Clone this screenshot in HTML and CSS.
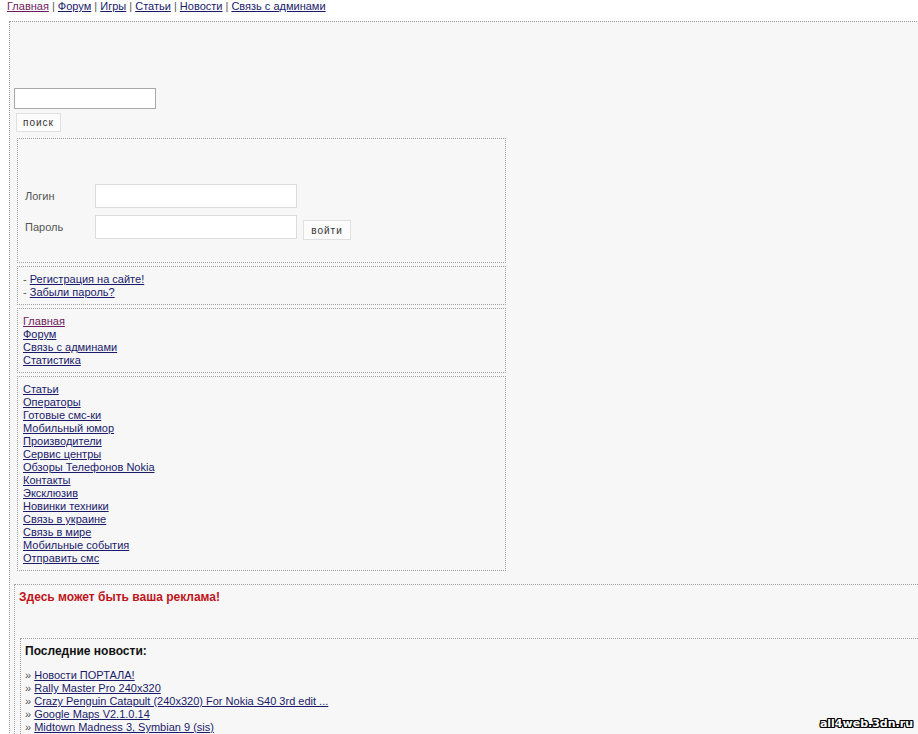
FILE: index.html
```html
<!DOCTYPE html>
<html lang="ru">
<head>
<meta charset="utf-8">
<title>all4web</title>
<link rel="stylesheet" href="styles.css">
</head>
<body>
<div class="topnav">
  <a href="#" class="visited">Главная</a> | <a href="#">Форум</a> | <a href="#">Игры</a> | <a href="#">Статьи</a> | <a href="#">Новости</a> | <a href="#">Связь с админами</a>
</div>
<div class="page">
  <div class="banner"></div>
  <form class="search">
    <input type="text" class="search-input">
    <button type="button" class="btn btn-search">поиск</button>
  </form>
  <div class="box login">
    <div class="login-row">
      <span class="login-label">Логин</span>
      <input type="text" class="login-input">
    </div>
    <div class="login-row">
      <span class="login-label">Пароль</span>
      <input type="password" class="login-input">
      <button type="button" class="btn btn-enter">войти</button>
    </div>
  </div>
  <div class="box links">
    <div>- <a href="#">Регистрация на сайте!</a></div>
    <div>- <a href="#">Забыли пароль?</a></div>
  </div>
  <div class="box links">
    <div><a href="#" class="visited">Главная</a></div>
    <div><a href="#">Форум</a></div>
    <div><a href="#">Связь с админами</a></div>
    <div><a href="#">Статистика</a></div>
  </div>
  <div class="box links">
    <div><a href="#">Статьи</a></div>
    <div><a href="#">Операторы</a></div>
    <div><a href="#">Готовые смс-ки</a></div>
    <div><a href="#">Мобильный юмор</a></div>
    <div><a href="#">Производители</a></div>
    <div><a href="#">Сервис центры</a></div>
    <div><a href="#">Обзоры Телефонов Nokia</a></div>
    <div><a href="#">Контакты</a></div>
    <div><a href="#">Эксклюзив</a></div>
    <div><a href="#">Новинки техники</a></div>
    <div><a href="#">Связь в украине</a></div>
    <div><a href="#">Связь в мире</a></div>
    <div><a href="#">Мобильные события</a></div>
    <div><a href="#">Отправить смс</a></div>
  </div>
  <div class="ad">
    <div class="ad-text">Здесь может быть ваша реклама!</div>
    <div class="news">
      <div class="news-title">Последние новости:</div>
      <div class="news-list">
        <div>» <a href="#">Новости ПОРТАЛА!</a></div>
        <div>» <a href="#">Rally Master Pro 240x320</a></div>
        <div>» <a href="#">Crazy Penguin Catapult (240x320) For Nokia S40 3rd edit ...</a></div>
        <div>» <a href="#">Google Maps V2.1.0.14</a></div>
        <div>» <a href="#">Midtown Madness 3, Symbian 9 (sis)</a></div>
      </div>
    </div>
  </div>
</div>
<div class="watermark">all4web.3dn.ru</div>
</body>
</html>
```
FILE: styles.css
```css
html, body {
  margin: 0;
  padding: 0;
  overflow: hidden;
  background: #ffffff;
}
body {
  font-family: "Liberation Sans", Arial, sans-serif;
  font-size: 11px;
  color: #333333;
  width: 918px;
  height: 734px;
  position: relative;
}
a {
  color: #1a1a6a;
  text-decoration: underline;
}
a.visited {
  color: #6e1a5e;
}
.topnav {
  line-height: 12px;
  height: 12px;
  margin: 0 0 9px 7px;
  color: #555;
}
.page {
  margin-left: 9px;
  width: 1000px;
  height: 760px;
  border: 1px dotted #9a9a9a;
  background: #f7f7f7;
  padding: 0 4px;
}
.banner {
  height: 66px;
}
.search {
  margin: 0;
  display: flex;
  flex-direction: column;
  align-items: flex-start;
}
.search-input {
  box-sizing: border-box;
  width: 142px;
  height: 21px;
  border: 1px solid #a8a8a8;
  background: #fff;
  margin: 0;
  padding: 0;
}
.btn {
  box-sizing: border-box;
  font-family: "Liberation Sans", Arial, sans-serif;
  font-size: 10px;
  letter-spacing: 1px;
  color: #333;
  background: #fcfcfc;
  border: 1px solid #e0e0e0;
  padding: 0;
  margin: 0;
}
.btn-search {
  width: 45px;
  height: 19px;
  margin: 4px 0 0 2px;
}
.box {
  margin-left: 3px;
  width: 489px;
  box-sizing: border-box;
  border: 1px dotted #a0a0a0;
}
.login {
  margin-top: 6px;
  height: 125px;
  padding: 45px 0 0 7px;
}
.login-row {
  display: flex;
  align-items: flex-start;
  height: 31px;
}
.login-label {
  width: 70px;
  line-height: 24px;
  color: #555;
}
.login-input {
  box-sizing: border-box;
  width: 202px;
  height: 24px;
  border: 1px solid #dcdcdc;
  background: #fff;
  margin: 0;
  padding: 0;
}
.btn-enter {
  width: 48px;
  height: 20px;
  margin: 5px 0 0 6px;
}
.links {
  margin-top: 3px;
  padding: 6px 5px 5px 5px;
  line-height: 13px;
  color: #555;
}
.ad {
  margin-top: 13px;
  border: 1px dotted #a0a0a0;
  border-right: none;
  margin-right: -20px;
  padding: 6px 0 0 4px;
  height: 200px;
}
.ad-text {
  color: #c0141a;
  font-weight: bold;
  font-size: 12px;
  line-height: 13px;
}
.news {
  margin: 34px 0 0 1px;
  border: 1px dotted #a0a0a0;
  border-right: none;
  padding: 6px 0 0 4px;
  height: 150px;
}
.news-title {
  font-weight: bold;
  font-size: 12px;
  color: #111;
  line-height: 13px;
  margin-bottom: 11px;
}
.news-list {
  line-height: 13px;
  color: #555;
}
.watermark {
  position: absolute;
  right: 5px;
  bottom: 4px;
  font-family: "DejaVu Sans", Verdana, sans-serif;
  font-weight: bold;
  font-size: 11px;
  color: #fff;
  text-shadow: 1px 0 0 #000, -1px 0 0 #000, 0 1px 0 #000, 0 -1px 0 #000, 1px 1px 0 #000, -1px -1px 0 #000, 1px -1px 0 #000, -1px 1px 0 #000;
}
```
